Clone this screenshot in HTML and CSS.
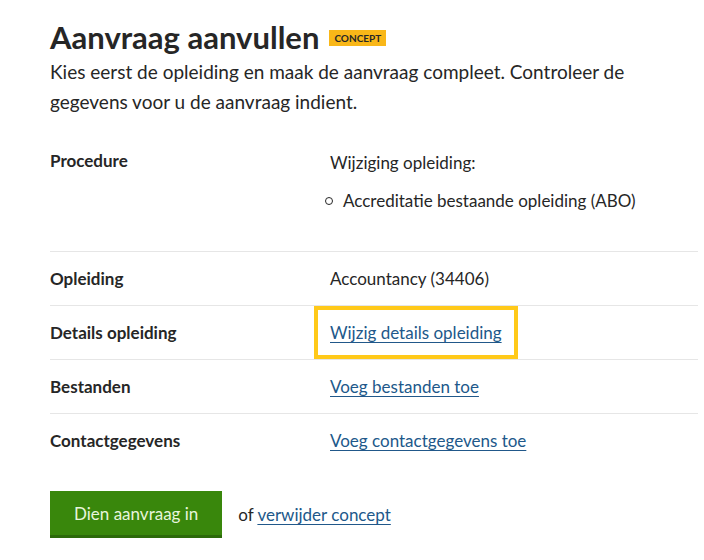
FILE: index.html
```html
<!DOCTYPE html>
<html lang="nl">
<head>
<meta charset="utf-8">
<title>Aanvraag aanvullen</title>
<link rel="stylesheet" href="styles.css">
</head>
<body>
<main class="page">
  <h1 class="title">Aanvraag aanvullen <span class="badge">Concept</span></h1>
  <p class="intro">Kies eerst de opleiding en maak de aanvraag compleet. Controleer de gegevens voor u de aanvraag indient.</p>
  <dl class="summary">
    <div class="row row-first">
      <dt class="key">Procedure</dt>
      <dd class="value">
        <p class="value-text">Wijziging opleiding:</p>
        <ul class="sub-list"><li>Accreditatie bestaande opleiding (ABO)</li></ul>
      </dd>
    </div>
    <div class="row">
      <dt class="key">Opleiding</dt>
      <dd class="value">Accountancy (34406)</dd>
    </div>
    <div class="row">
      <dt class="key">Details opleiding</dt>
      <dd class="value"><a class="link link-focus" href="#">Wijzig details opleiding</a></dd>
    </div>
    <div class="row">
      <dt class="key">Bestanden</dt>
      <dd class="value"><a class="link" href="#">Voeg bestanden toe</a></dd>
    </div>
    <div class="row row-last">
      <dt class="key">Contactgegevens</dt>
      <dd class="value"><a class="link" href="#">Voeg contactgegevens toe</a></dd>
    </div>
  </dl>
  <div class="actions">
    <button class="btn" type="button">Dien aanvraag in</button>
    <span class="alt">of <a class="link" href="#">verwijder concept</a></span>
  </div>
</main>
</body>
</html>
```

FILE: styles.css
```css
* { box-sizing: border-box; }
body {
  margin: 0;
  background: #fff;
  color: #262626;
  font-family: "Lato", "Noto Sans", sans-serif;
}
.page {
  padding: 18px 6px 0 50px;
}
.title {
  margin: 0;
  font-size: 31px;
  font-weight: 700;
  line-height: 38px;
  display: flex;
  align-items: center;
  gap: 10px;
}
.badge {
  background: #f9b718;
  color: #262626;
  font-size: 10px;
  font-weight: 700;
  text-transform: uppercase;
  line-height: 14px;
  padding: 1px 5px;
  margin-top: 2px;
}
.intro {
  margin: 1px 0 0;
  font-size: 19px;
  line-height: 30px;
}
.summary {
  margin: 27px 0 0;
}
.row {
  display: grid;
  grid-template-columns: 280px 1fr;
  border-bottom: 1px solid #e6e6e6;
  padding: 14px 0 13px;
  font-size: 17px;
  line-height: 26px;
}
.row-first { padding: 4px 0 35px; }
.row-last { border-bottom: none; }
.key {
  font-weight: 700;
  margin: 0;
}
.value {
  margin: 0;
}
.value-text { margin: 0; line-height: 30px; }
.sub-list {
  margin: 8px 0 0 -5px;
  padding: 0;
  list-style: none;
}
.sub-list li {
  display: flex;
  align-items: center;
  gap: 10px;
  line-height: 30px;
}
.sub-list li::before {
  content: "";
  width: 6px;
  height: 6px;
  border: 1px solid #262626;
  border-radius: 50%;
}
.link {
  color: #21588a;
  text-decoration: underline;
  text-underline-offset: 3px;
}
.link-focus {
  outline: 4px solid #ffc919;
  outline-offset: 12px;
}
.actions {
  display: flex;
  align-items: center;
  gap: 16px;
  margin-top: 24px;
}
.btn {
  background: #39870c;
  color: #e8f5dc;
  border: none;
  border-bottom: 3px solid #2c6a0a;
  font-family: inherit;
  font-size: 17px;
  height: 47px;
  padding: 0 24px;
}
.alt {
  font-size: 17px;
}
```
